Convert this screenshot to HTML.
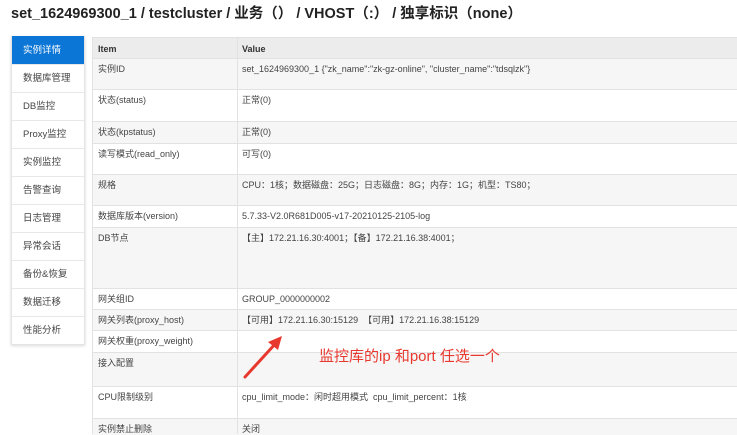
<!DOCTYPE html><html><head><meta charset="utf-8"><style>
body{margin:0;width:737px;height:434px;overflow:hidden;background:#fff;font-family:"Liberation Sans","Noto Sans CJK SC",sans-serif;color:#333;position:relative}
.t{position:absolute;left:11px;top:5px;font-size:14.5px;line-height:18px;font-weight:bold;color:#222;white-space:nowrap}
.side{position:absolute;left:11px;top:36px;width:72px;box-shadow:0 1px 3px rgba(0,0,0,.15);border:1px solid #e4e4e4;border-top:none}
.side div{height:27px;line-height:27px;border-top:1px solid #e8e8e8;font-size:9.5px;padding-left:11px;color:#444}
.side div.a{background:#0b76d6;color:#fff;border-top-color:#0b76d6}
.row{position:absolute;left:92px;width:645px;border-top:1px solid #e2e2e2;font-size:9px;line-height:12px;color:#444}
.row span{position:absolute;top:4px;white-space:nowrap;line-height:12px}
.row .k{left:6px}.row .v{left:150px}
.g{background:#f6f6f6}
.col{position:absolute;left:237px;top:37px;width:1px;height:397px;background:#e2e2e2}
.tl{position:absolute;left:92px;top:37px;width:1px;height:397px;background:#e2e2e2}
.h{background:#ececec;font-weight:bold;color:#333}
.ann{position:absolute;left:319px;top:347px;color:#e8392f;font-size:15px;line-height:20px;white-space:nowrap}
</style></head><body>
<div class="t">set_1624969300_1 / testcluster / 业务（） / VHOST（:） / 独享标识（none）</div>
<div class="side">
<div class="a">实例详情</div><div>数据库管理</div><div>DB监控</div><div>Proxy监控</div><div>实例监控</div><div>告警查询</div><div>日志管理</div><div>异常会话</div><div>备份&amp;恢复</div><div>数据迁移</div><div>性能分析</div>
</div>
<div class="row h" style="top:37px;height:21px"><span class="k" style="top:5px">Item</span><span class="v" style="top:5px">Value</span></div>
<div class="row g" style="top:58px;height:31px"><span class="k">实例ID</span><span class="v">set_1624969300_1 {"zk_name":"zk-gz-online", "cluster_name":"tdsqlzk"}</span></div>
<div class="row" style="top:89px;height:32px"><span class="k">状态(status)</span><span class="v">正常(0)</span></div>
<div class="row g" style="top:121px;height:22px"><span class="k">状态(kpstatus)</span><span class="v">正常(0)</span></div>
<div class="row" style="top:143px;height:31px"><span class="k">读写模式(read_only)</span><span class="v">可写(0)</span></div>
<div class="row g" style="top:174px;height:31px"><span class="k">规格</span><span class="v">CPU：1核；数据磁盘：25G；日志磁盘：8G；内存：1G；机型：TS80；</span></div>
<div class="row" style="top:205px;height:22px"><span class="k">数据库版本(version)</span><span class="v">5.7.33-V2.0R681D005-v17-20210125-2105-log</span></div>
<div class="row g" style="top:227px;height:61px"><span class="k">DB节点</span><span class="v">【主】172.21.16.30:4001；【备】172.21.16.38:4001；</span></div>
<div class="row" style="top:288px;height:21px"><span class="k">网关组ID</span><span class="v">GROUP_0000000002</span></div>
<div class="row g" style="top:309px;height:21px"><span class="k">网关列表(proxy_host)</span><span class="v">【可用】172.21.16.30:15129 &nbsp;【可用】172.21.16.38:15129</span></div>
<div class="row" style="top:330px;height:22px"><span class="k">网关权重(proxy_weight)</span></div>
<div class="row g" style="top:352px;height:34px"><span class="k">接入配置</span></div>
<div class="row" style="top:386px;height:32px"><span class="k">CPU限制级别</span><span class="v">cpu_limit_mode：闲时超用模式 &nbsp;cpu_limit_percent：1核</span></div>
<div class="row g" style="top:418px;height:16px"><span class="k">实例禁止删除</span><span class="v">关闭</span></div>
<div class="tl"></div><div class="col"></div>
<svg style="position:absolute;left:0;top:0" width="737" height="434"><path d="M245 377 L276 343" stroke="#e8392f" stroke-width="3" stroke-linecap="round"/><polygon points="282,336 268,342 278,350" fill="#e8392f"/></svg>
<div class="ann">监控库的ip 和port 任选一个</div>
</body></html>
